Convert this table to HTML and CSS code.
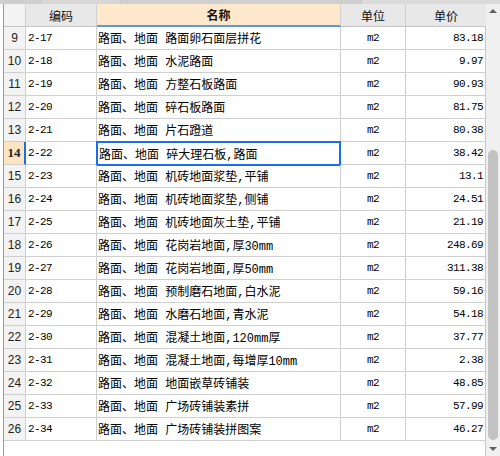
FILE: index.html
```html
<!DOCTYPE html>
<html lang="zh">
<head>
<meta charset="utf-8">
<link rel="stylesheet" href="styles.css">
</head>
<body>
<div class="tabs">
  <span class="tab t1"></span><span class="tab t2"></span><span class="tab t3"></span><span class="tab t4"></span>
</div>
<div class="frame">
  <div class="grid">
    <div class="hd rn"></div>
    <div class="hd">编码</div>
    <div class="hd hd-sel">名称</div>
    <div class="hd">单位</div>
    <div class="hd">单价</div>

    <div class="c rn">9</div><div class="c code">2-17</div><div class="c name">路面、地面 路面卵石面层拼花</div><div class="c unit">m2</div><div class="c price">83.18</div>
    <div class="c rn">10</div><div class="c code">2-18</div><div class="c name">路面、地面 水泥路面</div><div class="c unit">m2</div><div class="c price">9.97</div>
    <div class="c rn">11</div><div class="c code">2-19</div><div class="c name">路面、地面 方整石板路面</div><div class="c unit">m2</div><div class="c price">90.93</div>
    <div class="c rn">12</div><div class="c code">2-20</div><div class="c name">路面、地面 碎石板路面</div><div class="c unit">m2</div><div class="c price">81.75</div>
    <div class="c rn">13</div><div class="c code">2-21</div><div class="c name">路面、地面 片石蹬道</div><div class="c unit">m2</div><div class="c price">80.38</div>
    <div class="c rn rn-sel">14</div><div class="c code">2-22</div><div class="c name name-sel">路面、地面 碎大理石板,路面</div><div class="c unit">m2</div><div class="c price">38.42</div>
    <div class="c rn">15</div><div class="c code">2-23</div><div class="c name">路面、地面 机砖地面浆垫,平铺</div><div class="c unit">m2</div><div class="c price">13.1</div>
    <div class="c rn">16</div><div class="c code">2-24</div><div class="c name">路面、地面 机砖地面浆垫,侧铺</div><div class="c unit">m2</div><div class="c price">24.51</div>
    <div class="c rn">17</div><div class="c code">2-25</div><div class="c name">路面、地面 机砖地面灰土垫,平铺</div><div class="c unit">m2</div><div class="c price">21.19</div>
    <div class="c rn">18</div><div class="c code">2-26</div><div class="c name">路面、地面 花岗岩地面,厚30mm</div><div class="c unit">m2</div><div class="c price">248.69</div>
    <div class="c rn">19</div><div class="c code">2-27</div><div class="c name">路面、地面 花岗岩地面,厚50mm</div><div class="c unit">m2</div><div class="c price">311.38</div>
    <div class="c rn">20</div><div class="c code">2-28</div><div class="c name">路面、地面 预制磨石地面,白水泥</div><div class="c unit">m2</div><div class="c price">59.16</div>
    <div class="c rn">21</div><div class="c code">2-29</div><div class="c name">路面、地面 水磨石地面,青水泥</div><div class="c unit">m2</div><div class="c price">54.18</div>
    <div class="c rn">22</div><div class="c code">2-30</div><div class="c name">路面、地面 混凝土地面,120mm厚</div><div class="c unit">m2</div><div class="c price">37.77</div>
    <div class="c rn">23</div><div class="c code">2-31</div><div class="c name">路面、地面 混凝土地面,每增厚10mm</div><div class="c unit">m2</div><div class="c price">2.38</div>
    <div class="c rn">24</div><div class="c code">2-32</div><div class="c name">路面、地面 地面嵌草砖铺装</div><div class="c unit">m2</div><div class="c price">48.85</div>
    <div class="c rn">25</div><div class="c code">2-33</div><div class="c name">路面、地面 广场砖铺装素拼</div><div class="c unit">m2</div><div class="c price">57.99</div>
    <div class="c rn">26</div><div class="c code">2-34</div><div class="c name">路面、地面 广场砖铺装拼图案</div><div class="c unit">m2</div><div class="c price">46.27</div>
  </div>
  <div class="scrollbar">
    <svg class="arrow" width="14" height="14" viewBox="0 0 14 14"><path d="M3 9 L7 5 L11 9 Z" fill="#606060"/></svg>
    <div class="track"><div class="thumb"></div></div>
    <svg class="arrow" width="14" height="14" viewBox="0 0 14 14"><path d="M3 5 L7 9 L11 5 Z" fill="#606060"/></svg>
  </div>
</div>
</body>
</html>
```
FILE: styles.css
```css
* { box-sizing: border-box; }
html, body { margin: 0; padding: 0; background: #ffffff; }
body {
  width: 500px;
  height: 456px;
  overflow: hidden;
  font-family: "Liberation Mono", "Noto Sans CJK SC", monospace;
  font-size: 12px;
  color: #000;
}
.tabs {
  display: flex;
  height: 4px;
  background: #c9c9c9;
  gap: 1px;
}
.tab { height: 4px; background: #cfcfcf; }
.t1 { width: 40px; }
.t2 { width: 79px; background: #d6d6d6; }
.t3 { width: 240px; }
.t4 { flex: 1; background: #d9d9d9; }
.frame {
  display: flex;
  height: 452px;
  padding-left: 3px;
}
.grid {
  display: grid;
  grid-template-columns: 22px 71px 244px 65px 80px;
  grid-auto-rows: 23px;
  align-content: start;
  border-left: 1px solid #9a9a9a;
  border-right: 1px solid #c8c8c8;
  width: 483px;
  height: 452px;
}
.hd, .c {
  border-right: 1px solid #cfcfcf;
  border-bottom: 1px solid #cfcfcf;
  display: flex;
  align-items: center;
  white-space: pre;
  overflow: hidden;
}
.grid > .hd:nth-child(5), .grid > .price { border-right: none; }
.hd {
  background: #e8e8e8;
  justify-content: center;
  font-family: "Noto Sans CJK SC", sans-serif;
  font-size: 12px;
  color: #111;
  border-bottom-color: #c4c4c4;
}
.hd-sel {
  background: #ffe8cb;
  font-weight: bold;
  border-bottom: 2px solid #5a9ae0;
}
.rn {
  background: #f3f3f3;
  justify-content: center;
  font-family: "Liberation Sans", sans-serif;
  font-size: 12px;
  color: #222;
}
.rn-sel {
  background: #ffe4c2;
  font-family: "Liberation Serif", serif;
  font-weight: bold;
  font-size: 13px;
  border-right: 2px solid #1a6fe8;
}
.code {
  padding-left: 2px;
  letter-spacing: -0.6px;
  font-size: 11px;
}
.name {
  padding-left: 1px;
  font-family: "Liberation Mono", "Noto Sans CJK SC", sans-serif;
  font-size: 12px;
}
.name-sel {
  border: 2px solid #1a6fe8;
  margin: -1px 0 -1px -1px;
  padding-left: 1px;
}
.unit {
  justify-content: center;
  letter-spacing: -0.6px;
  font-size: 11px;
}
.price {
  justify-content: flex-end;
  padding-right: 3px;
  letter-spacing: -0.6px;
  font-size: 11px;
}
.scrollbar {
  width: 14px;
  height: 452px;
  background: #f0f0f0;
  display: flex;
  flex-direction: column;
}
.arrow { display: block; flex: none; }
.track {
  flex: 1;
  position: relative;
}
.thumb {
  position: absolute;
  left: 2px;
  right: 2px;
  top: 132px;
  bottom: 2px;
  background: #c2c2c2;
  border-radius: 5px;
}
```
